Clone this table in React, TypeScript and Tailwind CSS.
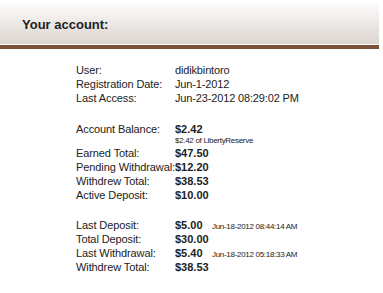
export default function App() {
  const rows1 = [
    ["User:", "didikbintoro"],
    ["Registration Date:", "Jun-1-2012"],
    ["Last Access:", "Jun-23-2012 08:29:02 PM"],
  ];

  return (
    <div className="w-[383px] h-[293px] bg-white text-[#222] font-['Liberation_Sans',Arial,sans-serif]">
      <div className="w-[379px]">
        <div className="h-[44px] bg-gradient-to-b from-white to-[#dcd4cf] flex items-center pl-[22px] pt-[6px]">
          <h1 className="text-[13px] font-bold text-[#222]">Your account:</h1>
        </div>
        <div className="h-px bg-white" />
        <div className="h-[4px] bg-[#7b5235]" />
      </div>

      <div className="pl-[76px] pt-[14px] text-[11px] leading-[14px]">
        {rows1.map(([l, v]) => (
          <div key={l} className="flex h-[14px]">
            <Label text={l} />
            <span className="tracking-[-0.15px]">{v}</span>
          </div>
        ))}

        <div className="h-[17px]" />

        <div className="flex h-[14px]">
          <Label text="Account Balance:" />
          <span className="font-bold">$2.42</span>
        </div>
        <div className="flex h-[10px] text-[8px] leading-[10px] tracking-[-0.3px]">
          <span className="w-[99px] shrink-0" />
          <span>$2.42 of LibertyReserve</span>
        </div>
        <Row label="Earned Total:" value="$47.50" />
        <Row label="Pending Withdrawal:" value="$12.20" />
        <Row label="Withdrew Total:" value="$38.53" />
        <Row label="Active Deposit:" value="$10.00" />

        <div className="h-[16px]" />

        <Row label="Last Deposit:" value="$5.00" date="Jun-18-2012 08:44:14 AM" />
        <Row label="Total Deposit:" value="$30.00" />
        <Row label="Last Withdrawal:" value="$5.40" date="Jun-18-2012 05:18:33 AM" />
        <Row label="Withdrew Total:" value="$38.53" />
      </div>
    </div>
  );
}

function Label({ text }: { text: string }) {
  return (
    <span className="min-w-[99px] shrink-0 whitespace-nowrap tracking-[-0.1px]">{text}</span>
  );
}

function Row({ label, value, date }: { label: string; value: string; date?: string }) {
  return (
    <div className="flex h-[14px] items-baseline">
      <Label text={label} />
      <span className="font-bold w-[37px] shrink-0">{value}</span>
      {date && <span className="text-[8px] tracking-[-0.3px]">{date}</span>}
    </div>
  );
}
